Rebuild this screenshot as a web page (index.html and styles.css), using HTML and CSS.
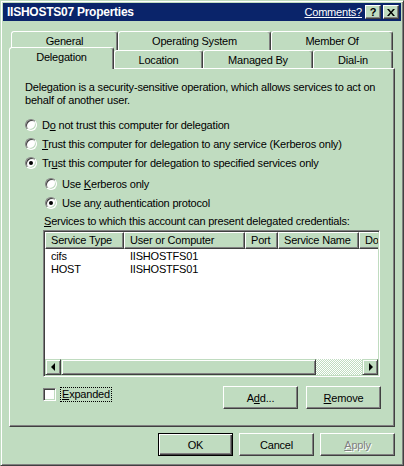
FILE: index.html
```html
<!DOCTYPE html>
<html>
<head>
<meta charset="utf-8">
<title>IISHOSTS07 Properties</title>
<link rel="stylesheet" href="styles.css">
</head>
<body>
<div class="window">
  <div class="titlebar">
    <span class="title">IISHOSTS07 Properties</span>
    <span class="comments">Comments?</span>
    <span class="tbtn help">?</span>
    <span class="tbtn close"><svg width="8" height="7" viewBox="0 0 8 7"><path d="M0 0h2l2 2.4 2-2.4h2l-3 3.5 3 3.5h-2l-2-2.4-2 2.4h-2l3-3.5z" fill="#000"/></svg></span>
  </div>
  <div class="dialog">
    <div class="tabs">
      <div class="tabrow back">
        <div class="tab t-general">General</div>
        <div class="tab t-os">Operating System</div>
        <div class="tab t-member">Member Of</div>
      </div>
      <div class="tabrow front">
        <div class="tab t-deleg selected">Delegation</div>
        <div class="tab t-loc">Location</div>
        <div class="tab t-managed">Managed By</div>
        <div class="tab t-dial">Dial-in</div>
      </div>
    </div>
    <div class="panel">
      <p class="intro">Delegation is a security-sensitive operation, which allows services to act on<br>behalf of another user.</p>
      <div class="options">
        <div class="opt"><span class="radio"></span><span>D<u>o</u> not trust this computer for delegation</span></div>
        <div class="opt"><span class="radio"></span><span><u>T</u>rust this computer for delegation to any service (Kerberos only)</span></div>
        <div class="opt"><span class="radio on"></span><span>Tr<u>u</u>st this computer for delegation to specified services only</span></div>
      </div>
      <div class="options sub">
        <div class="opt"><span class="radio"></span><span>Use <u>K</u>erberos only</span></div>
        <div class="opt"><span class="radio on"></span><span>Use an<u>y</u> authentication protocol</span></div>
      </div>
      <div class="svc-label"><u>S</u>ervices to which this account can present delegated credentials:</div>
      <div class="listbox">
        <div class="lv-header">
          <div class="hcell c1">Service Type</div>
          <div class="hcell c2">User or Computer</div>
          <div class="hcell c3">Port</div>
          <div class="hcell c4">Service Name</div>
          <div class="hcell c5">Domain Name</div>
        </div>
        <div class="lv-rows">
          <div class="lv-row"><span class="cell c1">cifs</span><span class="cell c2">IISHOSTFS01</span></div>
          <div class="lv-row"><span class="cell c1">HOST</span><span class="cell c2">IISHOSTFS01</span></div>
        </div>
        <div class="hscroll">
          <div class="sb-btn"><span class="arrow left"></span></div>
          <div class="sb-thumb"></div>
          <div class="sb-track"></div>
          <div class="sb-btn"><span class="arrow right"></span></div>
        </div>
      </div>
      <div class="list-actions">
        <div class="check">
          <span class="box"></span>
          <span class="check-text"><u>E</u>xpanded</span>
        </div>
        <div class="btn add">A<u>d</u>d...</div>
        <div class="btn remove"><u>R</u>emove</div>
      </div>
    </div>
    <div class="footer">
      <div class="btn default">OK</div>
      <div class="btn">Cancel</div>
      <div class="btn disabled"><u>A</u>pply</div>
    </div>
  </div>
</div>
</body>
</html>
```

FILE: styles.css
```css
* { box-sizing: border-box; }
html, body { margin: 0; padding: 0; }
body {
  width: 404px;
  height: 466px;
  overflow: hidden;
  background: #c0dcc0;
  font-family: "Liberation Sans", Arial, sans-serif;
  font-size: 11px;
  letter-spacing: -0.2px;
  color: #000;
}
u { text-decoration: underline; text-underline-offset: 1px; }

.window {
  width: 404px;
  height: 466px;
  background: #c0dcc0;
  border: 1px solid;
  border-color: #c0dcc0 #404040 #404040 #c0dcc0;
  box-shadow: inset 1px 1px #fff, inset -1px -1px #808080;
  padding: 2px;
  display: flex;
  flex-direction: column;
}

.titlebar {
  height: 18px;
  flex: none;
  background: #0a246a;
  display: flex;
  align-items: center;
  padding: 0 2px;
  color: #fff;
  white-space: nowrap;
}
.title { font-weight: bold; font-size: 12px; letter-spacing: -0.25px; margin-left: 2px; }
.comments { margin-left: auto; margin-right: 3px; text-decoration: underline; font-size: 11px; letter-spacing: -0.2px; }
.tbtn {
  width: 16px;
  height: 14px;
  background: #c0dcc0;
  border: 1px solid;
  border-color: #fff #404040 #404040 #fff;
  box-shadow: inset -1px -1px #808080;
  display: flex;
  align-items: center;
  justify-content: center;
  color: #000;
  letter-spacing: 0;
}
.tbtn + .tbtn { margin-left: 2px; }
.help { font-weight: bold; font-size: 11px; line-height: 12px; }

.dialog { flex: 1; padding: 10px 6px 0 6px; display: flex; flex-direction: column; }

.tabs { padding: 0 2px; }
.tabrow { display: flex; }
.tabrow.back { height: 19px; }
.tabrow.front { height: 18px; align-items: flex-end; }
.tab {
  height: 100%;
  background: #c0dcc0;
  border: 1px solid;
  border-bottom: none;
  border-color: #fff #404040 transparent #fff;
  border-radius: 3px 3px 0 0;
  box-shadow: inset -1px 0 #808080;
  display: flex;
  align-items: center;
  justify-content: center;
  white-space: nowrap;
  flex: none;
}
.t-general { width: 107px; }
.t-os { width: 153px; }
.t-member { width: 122px; }
.t-deleg { width: 103px; }
.t-loc { width: 89px; }
.t-managed { width: 110px; }
.t-dial { width: 80px; }
.tab.selected {
  width: 105px;
  height: 22px;
  margin: 0 0 -1px -2px;
  padding-bottom: 4px;
  position: relative;
  z-index: 1;
}

.panel {
  height: 359px;
  flex: none;
  border: 1px solid;
  border-color: #fff #404040 #404040 #fff;
  box-shadow: inset -1px -1px #808080;
  padding: 12px 0 0 15px;
}
.intro { margin: 0; line-height: 13px; white-space: nowrap; }

.options { margin-top: 8px; }
.options.sub { margin: 2px 0 0 20px; }
.opt { display: flex; align-items: center; height: 19px; white-space: nowrap; }
.radio {
  flex: none;
  width: 12px;
  height: 12px;
  border-radius: 50%;
  border: 1px solid;
  border-color: #808080 #fff #fff #808080;
  box-shadow: inset 1px 1px #404040, inset -1px -1px #c0dcc0;
  background: #fff;
  margin-right: 5px;
  display: flex;
  align-items: center;
  justify-content: center;
}
.radio.on::after { content: ""; width: 4px; height: 4px; border-radius: 50%; background: #000; }

.svc-label { margin: 3px 0 0 19px; line-height: 13px; white-space: nowrap; }

.listbox {
  margin: 2px 0 0 18px;
  width: 337px;
  height: 147px;
  background: #fff;
  border: 1px solid;
  border-color: #808080 #fff #fff #808080;
  box-shadow: inset 1px 1px #404040, inset -1px -1px #c0dcc0;
  padding: 1px;
  display: flex;
  flex-direction: column;
  overflow: hidden;
}
.lv-header { display: flex; height: 17px; flex: none; overflow: hidden; }
.hcell {
  flex: none;
  height: 17px;
  background: #c0dcc0;
  border: 1px solid;
  border-color: #fff #404040 #404040 #fff;
  box-shadow: inset -1px -1px #808080;
  padding-left: 5px;
  line-height: 15px;
  white-space: nowrap;
  overflow: hidden;
}
.c1 { width: 79px; }
.c2 { width: 121px; }
.c3 { width: 33px; }
.c4 { width: 81px; }
.c5 { width: 80px; }
.lv-rows { flex: 1; padding-top: 1px; }
.lv-row { display: flex; height: 13px; line-height: 13px; }
.cell { flex: none; padding-left: 6px; white-space: nowrap; }

.hscroll { display: flex; height: 16px; flex: none; }
.sb-btn, .sb-thumb {
  height: 16px;
  background: #c0dcc0;
  border: 1px solid;
  border-color: #c0dcc0 #404040 #404040 #c0dcc0;
  box-shadow: inset 1px 1px #fff, inset -1px -1px #808080;
}
.sb-btn { width: 16px; flex: none; display: flex; align-items: center; justify-content: center; }
.sb-thumb { width: 255px; flex: none; }
.sb-track {
  flex: 1;
  background: repeating-conic-gradient(#fff 0 25%, #c0dcc0 0 50%) 0 0 / 2px 2px;
}
.arrow { width: 0; height: 0; border-top: 4px solid transparent; border-bottom: 4px solid transparent; }
.arrow.left { border-right: 4px solid #000; margin-right: 1px; }
.arrow.right { border-left: 4px solid #000; margin-left: 1px; }

.list-actions { display: flex; height: 23px; margin: 9px 0 0 18px; width: 338px; }
.check { display: flex; align-items: center; align-self: flex-start; margin-top: 1px; height: 15px; }
.box {
  width: 13px;
  height: 13px;
  background: #fff;
  border: 1px solid;
  border-color: #808080 #fff #fff #808080;
  box-shadow: inset 1px 1px #404040, inset -1px -1px #c0dcc0;
}
.check-text { margin-left: 4px; border: 1px dotted #000; padding: 0 1px; line-height: 13px; }

.btn {
  width: 75px;
  height: 23px;
  flex: none;
  background: #c0dcc0;
  border: 1px solid;
  border-color: #fff #404040 #404040 #fff;
  box-shadow: inset -1px -1px #808080;
  display: flex;
  align-items: center;
  justify-content: center;
  white-space: nowrap;
}
.btn.add { margin-left: auto; }
.btn.remove { margin-left: 8px; }
.btn.default {
  border-color: #000;
  box-shadow: inset 1px 1px #fff, inset -1px -1px #404040, inset -2px -2px #808080;
}
.btn.disabled { color: #808080; text-shadow: 1px 1px #fff; }

.footer { display: flex; justify-content: flex-end; gap: 6px; margin-top: 6px; }
```
